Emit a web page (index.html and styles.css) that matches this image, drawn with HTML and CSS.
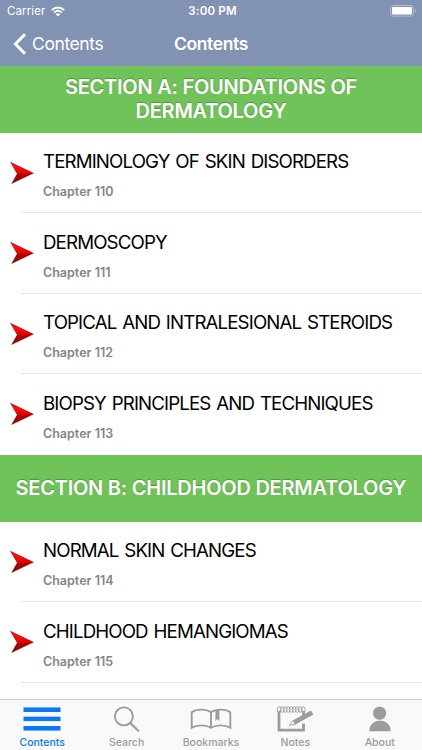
FILE: index.html
```html
<!DOCTYPE html>
<html lang="en">
<head>
    <meta charset="UTF-8">
    <meta name="viewport" content="width=device-width, initial-scale=1.0">
    <title>Contents</title>
    <link rel="stylesheet" href="styles.css">
</head>
<body>
    <!-- arrow shared by all chapter rows -->
    <svg class="defs" width="0" height="0">
        <defs>
            <linearGradient id="arrow-top" x1="0" y1="0" x2="0" y2="1">
                <stop offset="0" stop-color="#c8201c"/>
                <stop offset="0.4" stop-color="#f21010"/>
                <stop offset="1" stop-color="#e60000"/>
            </linearGradient>
            <linearGradient id="arrow-bottom" x1="1" y1="0" x2="0" y2="1">
                <stop offset="0" stop-color="#cc0000"/>
                <stop offset="1" stop-color="#8c0808"/>
            </linearGradient>
            <symbol id="arrow" viewBox="0 0 24 22">
                <path d="M0.3 0.1 L23.7 11.2 L1.2 21.9 L7.2 11.4 Z" fill="url(#arrow-bottom)"/>
                <path d="M0.3 0.1 L23.7 11.2 L7.2 12 Z" fill="url(#arrow-top)"/>
            </symbol>
        </defs>
    </svg>

    <div class="app">
        <header class="header">
            <div class="status-bar">
                <div class="carrier">
                    <span>Carrier</span>
                    <svg width="14" height="11" viewBox="0 0 14 11" fill="none" stroke="#fff" stroke-width="1.9">
                        <path d="M0.8 4.2 C4.4 0.6 9.6 0.6 13.2 4.2"/>
                        <path d="M3.1 6.6 C5.4 4.5 8.6 4.5 10.9 6.6"/>
                        <path d="M7 10.4 L4.8 8.2 C6 7 8 7 9.2 8.2 Z" fill="#fff" stroke="none"/>
                    </svg>
                </div>
                <div class="time">3:00 PM</div>
                <svg class="battery" width="27" height="12" viewBox="0 0 27 12">
                    <rect x="0.5" y="0.5" width="23" height="10.6" rx="2.5" fill="none" stroke="#b3bdd1"/>
                    <rect x="2" y="2" width="20" height="7.6" rx="1" fill="#fff"/>
                    <path d="M24.8 4 C26.4 4.6 26.4 7 24.8 7.6 Z" fill="#b3bdd1"/>
                </svg>
            </div>
            <div class="nav-bar">
                <div class="back">
                    <svg width="14" height="22" viewBox="0 0 14 22" fill="none" stroke="#fff" stroke-width="3">
                        <path d="M12 1.2 L2.4 11 L12 20.8"/>
                    </svg>
                    <span>Contents</span>
                </div>
                <div class="nav-title">Contents</div>
            </div>
        </header>

        <main class="list">
            <h2 class="section">SECTION A: FOUNDATIONS OF<br>DERMATOLOGY</h2>
            <div class="row">
                <svg class="arrow"><use href="#arrow"/></svg>
                <div class="chapter">
                    <div class="title">TERMINOLOGY OF SKIN DISORDERS</div>
                    <div class="number">Chapter 110</div>
                </div>
            </div>
            <div class="row">
                <svg class="arrow"><use href="#arrow"/></svg>
                <div class="chapter">
                    <div class="title">DERMOSCOPY</div>
                    <div class="number">Chapter 111</div>
                </div>
            </div>
            <div class="row">
                <svg class="arrow"><use href="#arrow"/></svg>
                <div class="chapter">
                    <div class="title">TOPICAL AND INTRALESIONAL STEROIDS</div>
                    <div class="number">Chapter 112</div>
                </div>
            </div>
            <div class="row last">
                <svg class="arrow"><use href="#arrow"/></svg>
                <div class="chapter">
                    <div class="title">BIOPSY PRINCIPLES AND TECHNIQUES</div>
                    <div class="number">Chapter 113</div>
                </div>
            </div>
            <h2 class="section">SECTION B: CHILDHOOD DERMATOLOGY</h2>
            <div class="row">
                <svg class="arrow"><use href="#arrow"/></svg>
                <div class="chapter">
                    <div class="title">NORMAL SKIN CHANGES</div>
                    <div class="number">Chapter 114</div>
                </div>
            </div>
            <div class="row">
                <svg class="arrow"><use href="#arrow"/></svg>
                <div class="chapter">
                    <div class="title">CHILDHOOD HEMANGIOMAS</div>
                    <div class="number">Chapter 115</div>
                </div>
            </div>
        </main>

        <nav class="tab-bar">
            <div class="tab active">
                <svg width="38" height="28" viewBox="0 0 38 28" fill="currentColor">
                    <rect x="0.5" y="1.4" width="37" height="4.6"/>
                    <rect x="0.5" y="10.7" width="37" height="4.4"/>
                    <rect x="0.5" y="20" width="37" height="4.6"/>
                </svg>
                <span>Contents</span>
            </div>
            <div class="tab">
                <svg width="28" height="28" viewBox="0 0 28 28" fill="none" stroke="currentColor">
                    <circle cx="10.9" cy="10.4" r="9" stroke-width="1.9"/>
                    <path d="M17.2 16.9 L25.8 25.2" stroke-width="2.2"/>
                </svg>
                <span>Search</span>
            </div>
            <div class="tab">
                <svg width="42" height="28" viewBox="0 0 42 28" fill="none" stroke="currentColor" stroke-width="1.9">
                    <path d="M21 6.2 C16 2.8 6.5 2.8 1.7 6.2 V21.8 C7 18.6 16 18.6 21 21.8 C26 18.6 35 18.6 40.3 21.8 V6.2 C35.5 2.8 26 2.8 21 6.2 V21.8"/>
                    <path d="M25.4 4.3 H29.4 V15.2 L27.4 13 L25.4 15.2 Z" fill="currentColor" stroke="none"/>
                </svg>
                <span>Bookmarks</span>
            </div>
            <div class="tab">
                <svg width="38" height="28" viewBox="0 0 38 28" fill="none" stroke="currentColor">
                    <path d="M3 5 V24.2 H27.5 V17.5 M27.5 5 V9.5" stroke-width="2.8"/>
                    <g stroke-width="0.9">
                        <ellipse cx="3.2" cy="3.5" rx="2" ry="2.8"/>
                        <ellipse cx="6.2" cy="3.5" rx="2" ry="2.8"/>
                        <ellipse cx="9.2" cy="3.5" rx="2" ry="2.8"/>
                        <ellipse cx="12.2" cy="3.5" rx="2" ry="2.8"/>
                        <ellipse cx="15.2" cy="3.5" rx="2" ry="2.8"/>
                        <ellipse cx="18.2" cy="3.5" rx="2" ry="2.8"/>
                        <ellipse cx="21.2" cy="3.5" rx="2" ry="2.8"/>
                        <ellipse cx="24.2" cy="3.5" rx="2" ry="2.8"/>
                        <ellipse cx="27.2" cy="3.5" rx="2" ry="2.8"/>
                    </g>
                    <path d="M17.2 14.2 L35 4.4 L37.4 8.4 L19.6 18.5 Z" fill="currentColor" stroke="none"/>
                    <path d="M17 14.4 L13.3 19.3 L19.4 18.4 Z" fill="#f9f9f9" stroke-width="0.9"/>
                </svg>
                <span>Notes</span>
            </div>
            <div class="tab">
                <svg width="24" height="28" viewBox="0 0 24 28" fill="currentColor">
                    <path d="M1.3 25.2 C1.3 11 22.7 11 22.7 25.2 Z"/>
                    <circle cx="11.6" cy="7.2" r="7" stroke="#f9f9f9" stroke-width="0.8"/>
                </svg>
                <span>About</span>
            </div>
        </nav>
    </div>
</body>
</html>
```

FILE: styles.css
```css
* {
    box-sizing: border-box;
}
body {
    margin: 0;
    font-family: Inter, sans-serif;
    background-color: #fff;
}
.defs {
    display: block;
}
.app {
    display: flex;
    flex-direction: column;
    width: 422px;
    height: 750px;
    overflow: hidden;
}

/* header */
.header {
    flex: none;
    height: 65.5px;
    background-color: #8292b3;
    color: #fff;
}
.status-bar {
    display: grid;
    grid-template-columns: 1fr auto 1fr;
    align-items: center;
    height: 22px;
    padding: 0 5px 0 7px;
    font-size: 11.5px;
    line-height: 22px;
}
.carrier {
    display: flex;
    align-items: center;
    gap: 6px;
    letter-spacing: 0.1px;
}
.time {
    padding-left: 1px;
    font-weight: 600;
    letter-spacing: 0.2px;
}
.battery {
    justify-self: end;
}
.nav-bar {
    display: grid;
    grid-template-columns: 1fr auto 1fr;
    align-items: center;
    height: 43px;
    padding: 0 13px;
    font-size: 17.5px;
}
.back {
    display: flex;
    align-items: center;
    gap: 5px;
    letter-spacing: -0.4px;
}
.nav-title {
    font-weight: 600;
    letter-spacing: -0.35px;
}

/* chapter list */
.list {
    flex: 1;
    min-height: 0;
    overflow: hidden;
}
.section {
    display: flex;
    align-items: center;
    justify-content: center;
    height: 67px;
    margin: 0;
    background-color: #70c359;
    color: #fff;
    font-size: 20px;
    font-weight: 600;
    line-height: 24px;
    letter-spacing: -0.24px;
    text-align: center;
    white-space: nowrap;
    text-shadow: 0 -1px 1px rgba(70, 110, 60, 0.6);
}
.row {
    display: flex;
    height: 80.5px;
    padding-left: 10px;
}
.arrow {
    flex: none;
    width: 24px;
    height: 22px;
    margin-top: 29px;
}
.chapter {
    flex: 1;
    margin-left: -13px;
    padding: 17.5px 0 0 22px;
    border-bottom: 1px solid #e6e6e8;
}
.last .chapter {
    border-bottom: none;
}
.title {
    color: #000;
    font-size: 18.7px;
    line-height: 24px;
    letter-spacing: -0.87px;
    word-spacing: 1.4px;
    white-space: nowrap;
}
.number {
    margin-top: 10px;
    color: #858585;
    font-size: 12.5px;
    font-weight: 600;
    line-height: 16px;
}

/* tab bar */
.tab-bar {
    flex: none;
    display: flex;
    justify-content: space-between;
    height: 51px;
    border-top: 1px solid #d3d3d5;
    background-color: #f9f9f9;
}
.tab {
    display: flex;
    flex-direction: column;
    align-items: center;
    width: 84.4px;
    padding-top: 6px;
    color: #9c9c9c;
    font-size: 10.5px;
    font-weight: 500;
    line-height: 14px;
}
.tab span {
    margin-top: 2px;
}
.active {
    color: #0b79f7;
}
```
